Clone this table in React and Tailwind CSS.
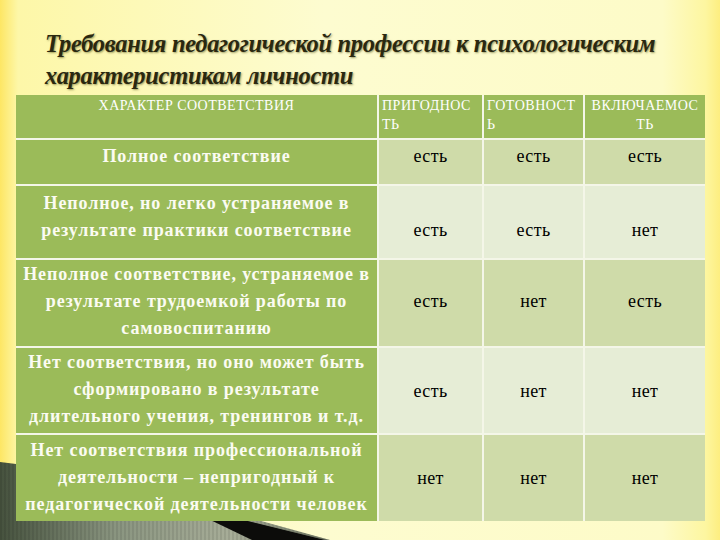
import React from "react";

const rows = [
  {
    label: ["Полное соответствие"],
    vals: ["есть", "есть", "есть"],
    band: "bg-[#cfdba9]",
    labelPad: "pt-[3px]",
    valPad: "pt-[3px]",
  },
  {
    label: ["Неполное, но легко устраняемое в", "результате практики соответствие"],
    vals: ["есть", "есть", "нет"],
    band: "bg-[#e6edd6]",
    labelPad: "pt-[4px]",
    valPad: "pt-[31px]",
  },
  {
    label: ["Неполное соответствие, устраняемое в", "результате трудоемкой работы по", "самовоспитанию"],
    vals: ["есть", "нет", "есть"],
    band: "bg-[#cfdba9]",
    labelPad: "pt-[1px]",
    valPad: "pt-[28px]",
  },
  {
    label: ["Нет соответствия, но оно может быть", "сформировано в результате", "длительного учения, тренингов и т.д."],
    vals: ["есть", "нет", "нет"],
    band: "bg-[#e6edd6]",
    labelPad: "pt-[1px]",
    valPad: "pt-[30px]",
  },
  {
    label: ["Нет соответствия профессиональной", "деятельности – непригодный к", "педагогической деятельности человек"],
    vals: ["нет", "нет", "нет"],
    band: "bg-[#cfdba9]",
    labelPad: "pt-[2px]",
    valPad: "pt-[30px]",
  },
];

function Corner() {
  // decorative shape from the slide theme, bottom-left
  return (
    <svg className="absolute left-0 top-0" width="720" height="540" viewBox="0 0 720 540">
      <defs>
        <linearGradient id="g" x1="0" y1="0" x2="1" y2="0">
          <stop offset="0" stopColor="#46523e" />
          <stop offset="0.35" stopColor="#8a9580" />
          <stop offset="0.7" stopColor="#a7ad98" />
          <stop offset="1" stopColor="#6c735f" />
        </linearGradient>
        <pattern id="st" width="4" height="10" patternUnits="userSpaceOnUse">
          <rect width="2" height="10" fill="#000" opacity="0.08" />
        </pattern>
      </defs>
      <path d="M0 462 Q140 478 250 518 L330 540 L0 540 Z" fill="url(#g)" />
      <path d="M0 462 Q140 478 250 518 L330 540 L0 540 Z" fill="url(#st)" />
      <path d="M175 503 L325 540 L252 540 Z" fill="#0c0c0a" />
    </svg>
  );
}

export default function App() {
  return (
    <div
      className="relative w-[720px] h-[540px] overflow-hidden bg-[linear-gradient(to_right,#fde664_0%,#fdf7a8_2.5%,#fdfcd0_45%,#fdfbc8_92%,#fdf6a0_98%,#fdee80_100%)]"
      style={{ fontFamily: '"Liberation Serif", "DejaVu Serif", serif' }}
    >
      <Corner />
      <div className="relative">
        <h1 className="pt-[28px] pl-[45px] text-[24.5px] leading-[32px] font-bold italic text-[#2a2810] [text-shadow:1px_1px_2px_rgba(60,60,0,0.5)] tracking-[-0.3px]">
          Требования педагогической профессии к психологическим
          <br />
          характеристикам личности
        </h1>

        <div className="ml-[16px] mt-[3px] w-[689px] grid grid-cols-[361px_103px_99px_120px] grid-rows-[43px_44px_72px_86px_85px_86px] gap-[2px] bg-[#f4f6e8]">
          <div className="bg-[#9bbb59] text-white text-[14px] tracking-[0.5px] leading-[19px] text-center pt-[1px]">
            ХАРАКТЕР СООТВЕТСТВИЯ
          </div>
          <div className="bg-[#9bbb59] text-white text-[14px] tracking-[0.5px] leading-[19px] pl-[3px] pt-[1px] whitespace-nowrap overflow-hidden">
            ПРИГОДНОС
            <br />
            ТЬ
          </div>
          <div className="bg-[#9bbb59] text-white text-[14px] tracking-[0.5px] leading-[19px] pl-[3px] pt-[1px] whitespace-nowrap overflow-hidden">
            ГОТОВНОСТ
            <br />
            Ь
          </div>
          <div className="bg-[#9bbb59] text-white text-[14px] tracking-[0.5px] leading-[19px] text-center pt-[1px] whitespace-nowrap overflow-hidden">
            ВКЛЮЧАЕМОС
            <br />
            ТЬ
          </div>

          {rows.map((r, i) => (
            <React.Fragment key={i}>
              <div
                className={`bg-[#9bbb59] text-[#fbfbf2] font-bold text-[18px] tracking-[0.9px] leading-[27px] text-center whitespace-nowrap overflow-hidden ${r.labelPad}`}
              >
                {r.label.map((l, j) => (
                  <div key={j}>{l}</div>
                ))}
              </div>
              {r.vals.map((v, j) => (
                <div key={j} className={`${r.band} text-black text-[18px] tracking-[0.4px] leading-[27px] text-center ${r.valPad}`}>
                  {v}
                </div>
              ))}
            </React.Fragment>
          ))}
        </div>
      </div>
    </div>
  );
}
